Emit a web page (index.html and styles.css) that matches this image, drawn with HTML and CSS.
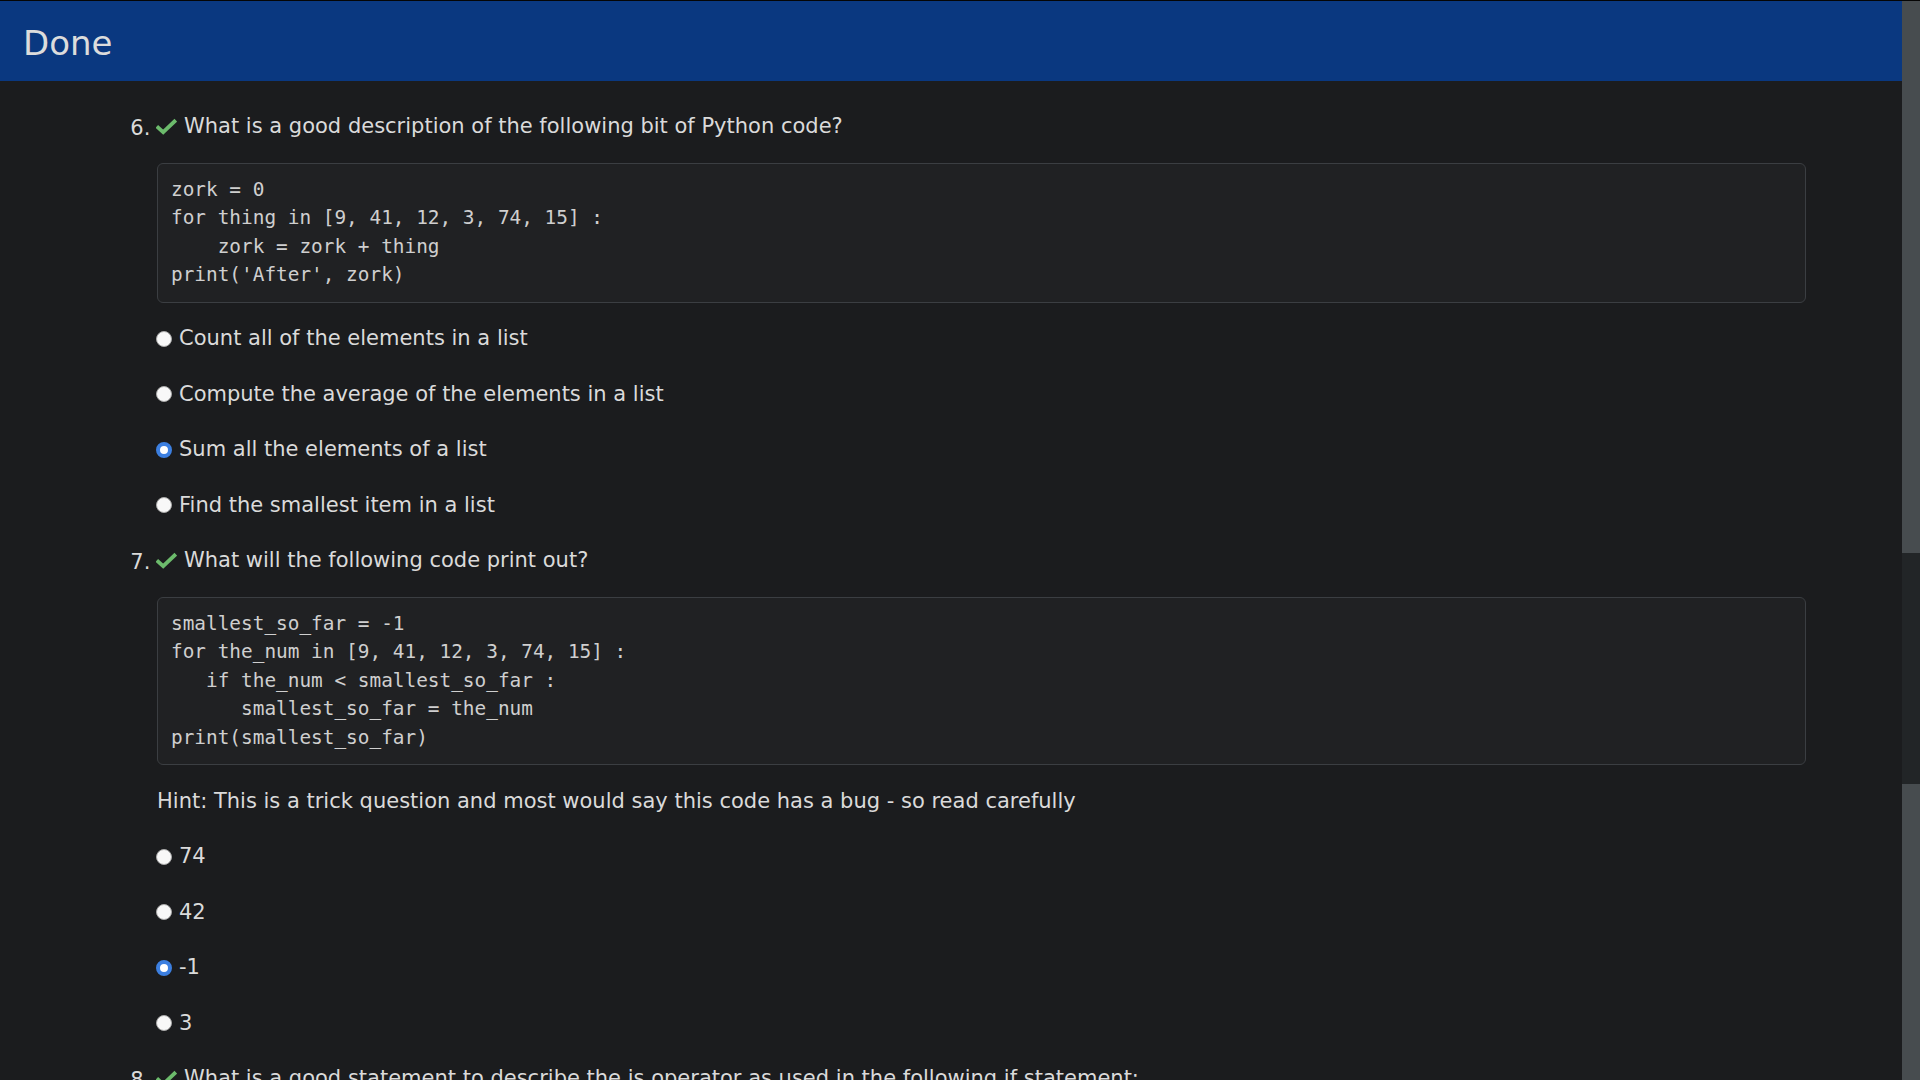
FILE: index.html
```html
<!DOCTYPE html>
<html lang="en">
<head>
<meta charset="utf-8">
<title>Done</title>
<link rel="stylesheet" href="styles.css">
</head>
<body>
<div class="app">
  <div class="main">
    <header class="topbar"><h1 class="title">Done</h1></header>
    <div class="content">
      <ol class="quiz" start="6">
        <li class="q">
          <div class="q-title"><svg class="check" viewBox="0 0 21 17" width="21" height="17"><polyline points="0.8,8.4 7.2,14.2 19.8,2.2" fill="none" stroke="#6cbb6c" stroke-width="3.8"/></svg>What is a good description of the following bit of Python code?</div>
<pre class="code">zork = 0
for thing in [9, 41, 12, 3, 74, 15] :
    zork = zork + thing
print('After', zork)</pre>
          <div class="opt"><span class="radio"></span>Count all of the elements in a list</div>
          <div class="opt"><span class="radio"></span>Compute the average of the elements in a list</div>
          <div class="opt"><span class="radio on"></span>Sum all the elements of a list</div>
          <div class="opt"><span class="radio"></span>Find the smallest item in a list</div>
        </li>
        <li class="q">
          <div class="q-title"><svg class="check" viewBox="0 0 21 17" width="21" height="17"><polyline points="0.8,8.4 7.2,14.2 19.8,2.2" fill="none" stroke="#6cbb6c" stroke-width="3.8"/></svg>What will the following code print out?</div>
<pre class="code">smallest_so_far = -1
for the_num in [9, 41, 12, 3, 74, 15] :
   if the_num &lt; smallest_so_far :
      smallest_so_far = the_num
print(smallest_so_far)</pre>
          <p class="hint">Hint: This is a trick question and most would say this code has a bug - so read carefully</p>
          <div class="opt"><span class="radio"></span>74</div>
          <div class="opt"><span class="radio"></span>42</div>
          <div class="opt"><span class="radio on"></span>-1</div>
          <div class="opt"><span class="radio"></span>3</div>
        </li>
        <li class="q">
          <div class="q-title"><svg class="check" viewBox="0 0 21 17" width="21" height="17"><polyline points="0.8,8.4 7.2,14.2 19.8,2.2" fill="none" stroke="#6cbb6c" stroke-width="3.8"/></svg>What is a good statement to describe the is operator as used in the following if statement:</div>
        </li>
      </ol>
    </div>
  </div>
  <div class="scrollbar">
    <div class="sb-thumb sb-top"></div>
    <div class="sb-track"></div>
    <div class="sb-thumb sb-bottom"></div>
  </div>
</div>
</body>
</html>
```
FILE: styles.css
```css
html, body {
  margin: 0;
  padding: 0;
  height: 1080px;
  overflow: hidden;
  background: #1b1c1e;
}
body {
  font-family: "DejaVu Sans", Verdana, sans-serif;
  color: #dadada;
  font-size: 21px;
}
.app {
  display: flex;
  height: 1079px;
  border-top: 1px solid #050505;
}
.main {
  flex: 1;
  min-width: 0;
  overflow: hidden;
}
.topbar {
  height: 80px;
  background: #0a3880;
  display: flex;
  align-items: center;
  padding-left: 23px;
}
.title {
  margin: 0;
  font-weight: normal;
  font-size: 34px;
  color: #dcdcdc;
  line-height: 1;
  padding-top: 4px;
}
.content {
  padding: 26px 96px 0 96px;
}
.quiz {
  margin: 0;
  padding-left: 61px;
}
.q-title,
.opt,
.hint {
  line-height: 39px;
  margin: 0 0 16.5px 0;
}
.q-title {
  display: flex;
  align-items: center;
}
.check {
  flex: none;
  margin-left: -1px;
  margin-right: 7px;
}
.code {
  margin: 0 0 16.5px 0;
  background: #202123;
  border: 1px solid #3b3e42;
  border-radius: 6px;
  padding: 12px 12px 12px 13px;
  font-family: "DejaVu Sans Mono", "Liberation Mono", monospace;
  font-size: 19.4px;
  line-height: 28.5px;
  color: #cfcfcf;
  white-space: pre;
}
.opt {
  display: flex;
  align-items: center;
}
.radio {
  flex: none;
  width: 14px;
  height: 14px;
  border-radius: 50%;
  background: #f8f8f8;
  border: 1px solid #a9a9a9;
  margin-left: -1px;
  margin-right: 7px;
  box-sizing: content-box;
}
.radio.on {
  width: 8px;
  height: 8px;
  background: #ffffff;
  border: 4px solid #3c7fe0;
}
.scrollbar {
  width: 18px;
  flex: none;
  display: flex;
  flex-direction: column;
}
.sb-thumb {
  background: #474c4f;
}
.sb-top {
  height: 552px;
}
.sb-track {
  height: 231px;
  background: #222527;
}
.sb-bottom {
  flex: 1;
}
```
